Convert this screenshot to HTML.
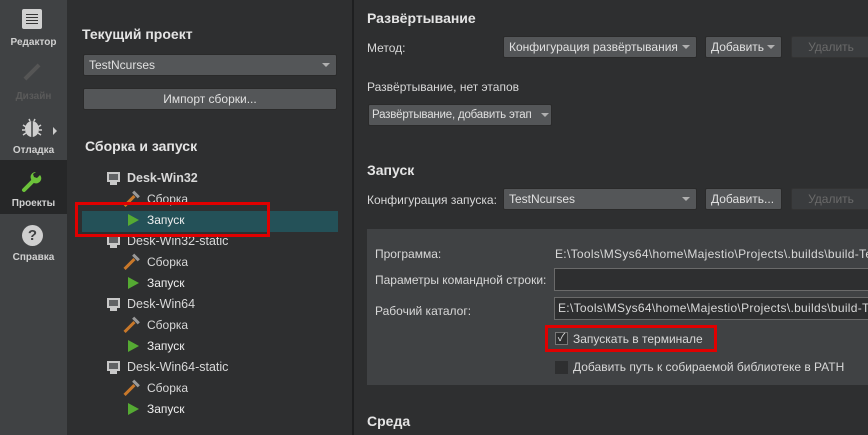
<!DOCTYPE html>
<html><head><meta charset="utf-8"><style>
*{margin:0;padding:0;box-sizing:border-box}
body{width:868px;height:435px;overflow:hidden;background:#2e2f30;font-family:"Liberation Sans","Noto Sans CJK SC",sans-serif;font-size:12px;color:#d8d8d8;position:relative}
.a{position:absolute;white-space:nowrap}
.b{font-weight:bold;font-size:14px;color:#e4e4e4}
.side{left:0;top:0;width:67px;height:435px;background:#404244}
.sl{width:67px;text-align:center;font-size:10px;font-weight:bold;color:#d0d0d0}
.combo{background:#545658;border:1px solid #2a2a2a;border-radius:2px;padding-left:5px;line-height:20px;color:#e0e0e0;overflow:hidden}
.arr{position:absolute;right:6px;top:8px;width:0;height:0;border-left:4px solid transparent;border-right:4px solid transparent;border-top:4px solid #b0b0b0}
.dis{background:#3a3c3e;border:1px solid #333;color:#6a6a6a;text-align:center;line-height:20px;border-radius:2px}
.inp{background:#2e2f30;border:1px solid #6a6a6a;line-height:21px;padding-left:3px;overflow:hidden}
.red{border:3px solid #e00000}
.t{font-size:12px;color:#d8d8d8}
.play{width:0;height:0;border-top:6px solid transparent;border-bottom:6px solid transparent;border-left:11px solid #55aa33}
</style></head><body>
<div class="a side"></div>
<div class="a" style="left:0;top:160px;width:67px;height:54px;background:#262728"></div>
<div class="a" style="left:22px;top:9px;width:20px;height:20px;background:#d0d0d0;border-radius:2px"></div>
<div class="a" style="left:26px;top:14px;width:12px;height:1px;background:#333;box-shadow:0 3px 0 #333,0 6px 0 #333,0 9px 0 #333"></div>
<div class="a sl" style="top:37px">Редактор</div>
<div class="a" style="left:30px;top:62px;width:4px;height:20px;background:#555;transform:rotate(45deg)"></div>
<div class="a sl" style="top:91px;color:#5a5a5a">Дизайн</div>
<svg class="a" style="left:20px;top:117px" width="24" height="22" viewBox="0 0 24 22"><ellipse cx="12" cy="12" rx="7" ry="8" fill="#cfcfcf"/><path d="M12 4V20" stroke="#404244" stroke-width="1.5"/><path d="M3 8L6 10M21 8L18 10M2 13H5M22 13H19M3 18L6 16M21 18L18 16M9 2L10 4M15 2L14 4" stroke="#cfcfcf" stroke-width="1.5"/></svg>
<div class="a" style="left:53px;top:127px;border-top:4px solid transparent;border-bottom:4px solid transparent;border-left:4px solid #ccc"></div>
<div class="a sl" style="top:145px">Отладка</div>
<svg class="a" style="left:21px;top:171px" width="22" height="22" viewBox="0 0 22 22"><path d="M3 19 L12 10" stroke="#6cc23a" stroke-width="4" stroke-linecap="round"/><path d="M10 8 A5 5 0 0 0 17 12 A5 5 0 0 0 19 4 L16 7 L13 6 L12 3 L15 1 A5 5 0 0 0 10 8Z" fill="#6cc23a"/></svg>
<div class="a sl" style="top:198px">Проекты</div>
<div class="a" style="left:22px;top:225px;width:21px;height:21px;border-radius:50%;background:#cfcfcf;color:#404244;font-weight:bold;font-size:15px;text-align:center;line-height:21px">?</div>
<div class="a sl" style="top:252px">Справка</div>

<div class="a b" style="left:82px;top:26px">Текущий проект</div>
<div class="a combo" style="left:83px;top:54px;width:254px;height:22px">TestNcurses<span class="arr"></span></div>
<div class="a combo" style="left:83px;top:88px;width:254px;height:22px;text-align:center;padding:0">Импорт сборки...</div>
<div class="a b" style="left:85px;top:138px">Сборка и запуск</div>
<div class="a" style="left:82px;top:211px;width:256px;height:21px;background:#245158"></div>
<div id="tree"></div>
<div class="a red" style="left:75px;top:202px;width:195px;height:35px"></div>

<div class="a" style="left:352px;top:0;width:2px;height:435px;background:#1e1f20"></div>
<div class="a b" style="left:367px;top:10px">Развёртывание</div>
<div class="a t" style="left:367px;top:41px">Метод:</div>
<div class="a combo" style="left:503px;top:36px;width:194px;height:22px">Конфигурация развёртывания<span class="arr"></span></div>
<div class="a combo" style="left:705px;top:36px;width:77px;height:22px">Добавить<span class="arr"></span></div>
<div class="a dis" style="left:791px;top:36px;width:80px;height:22px">Удалить</div>
<div class="a t" style="left:367px;top:80px">Развёртывание, нет этапов</div>
<div class="a combo" style="left:368px;top:104px;width:184px;height:22px;padding-left:3px;font-size:11.5px;letter-spacing:-0.2px">Развёртывание, добавить этап<span class="arr" style="right:2px"></span></div>
<div class="a b" style="left:367px;top:162px">Запуск</div>
<div class="a t" style="left:367px;top:193px">Конфигурация запуска:</div>
<div class="a combo" style="left:503px;top:188px;width:194px;height:22px">TestNcurses<span class="arr"></span></div>
<div class="a combo" style="left:705px;top:188px;width:77px;height:22px">Добавить...</div>
<div class="a dis" style="left:791px;top:188px;width:80px;height:22px">Удалить</div>

<div class="a" style="left:367px;top:229px;width:510px;height:156px;background:#404244"></div>
<div class="a t" style="left:375px;top:247px">Программа:</div>
<div class="a t" style="left:555px;top:247px;letter-spacing:0.3px">E:\Tools\MSys64\home\Majestio\Projects\.builds\build-Test</div>
<div class="a t" style="left:375px;top:273px">Параметры командной строки:</div>
<div class="a inp" style="left:554px;top:268px;width:320px;height:23px"></div>
<div class="a t" style="left:375px;top:304px">Рабочий каталог:</div>
<div class="a inp t" style="left:554px;top:297px;width:320px;height:23px;letter-spacing:0.3px">E:\Tools\MSys64\home\Majestio\Projects\.builds\build-Test</div>
<div class="a" style="left:555px;top:332px;width:13px;height:13px;background:#2e2f30;border:1px solid #777;color:#ddd;font-size:11px;line-height:11px;text-align:center">✓</div>
<div class="a t" style="left:573px;top:332px">Запускать в терминале</div>
<div class="a red" style="left:545px;top:325px;width:172px;height:27px"></div>
<div class="a" style="left:555px;top:361px;width:13px;height:13px;background:#2e2f30"></div>
<div class="a t" style="left:573px;top:360px">Добавить путь к собираемой библиотеке в PATH</div>
<div class="a b" style="left:367px;top:413px">Среда</div>
<script>
var rows=[["m","Desk-Win32",1],["h","Сборка"],["p","Запуск"],["m","Desk-Win32-static"],["h","Сборка"],["p","Запуск"],["m","Desk-Win64"],["h","Сборка"],["p","Запуск"],["m","Desk-Win64-static"],["h","Сборка"],["p","Запуск"]];
var h="";rows.forEach(function(r,i){var y=171+i*21;
if(r[0]=="m"){h+='<div class="a" style="left:107px;top:'+(y+1)+'px;width:13px;height:10px;border:1px solid #c8c8c8;background:#c8c8c8"></div><div class="a" style="left:109px;top:'+(y+3)+'px;width:9px;height:6px;background:#606264"></div><div class="a" style="left:110px;top:'+(y+11)+'px;width:7px;height:3px;background:#c8c8c8"></div><div class="a t" style="left:127px;top:'+y+'px;font-size:12.5px;'+(r[2]?'font-weight:bold':'')+'">'+r[1]+'</div>';}
else if(r[0]=="h"){h+='<div class="a" style="left:128px;top:'+(y+2)+'px;width:3px;height:14px;background:#c8782a;transform:rotate(45deg)"></div><div class="a" style="left:132px;top:'+(y+1)+'px;width:8px;height:3px;background:#999;transform:rotate(45deg)"></div><div class="a t" style="left:147px;top:'+y+'px">'+r[1]+'</div>';}
else{h+='<div class="a play" style="left:128px;top:'+(y+1)+'px"></div><div class="a t" style="left:147px;top:'+y+'px;color:#eee">'+r[1]+'</div>';}
});document.getElementById("tree").innerHTML=h;
</script>
</body></html>
